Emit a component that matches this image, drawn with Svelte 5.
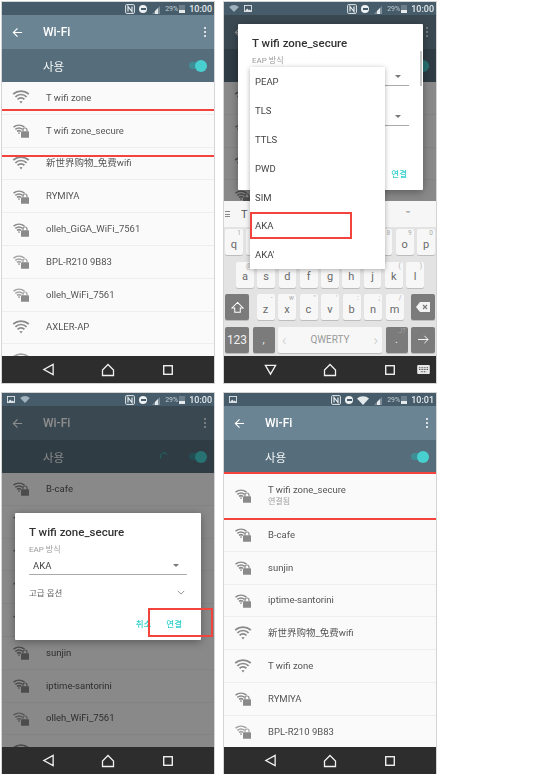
<script>
	const first = [
		{ name: 'T wifi zone' },
		{ name: 'T wifi zone_secure', lock: true },
		{ name: '新世界购物_免费wifi' },
		{ name: 'RYMIYA', lock: true },
		{ name: 'olleh_GiGA_WiFi_7561', lock: true },
		{ name: 'BPL-R210 9B83', lock: true, weak: true },
		{ name: 'olleh_WiFi_7561', lock: true, weak: true },
		{ name: 'AXLER-AP' },
		{ name: '', weak: true }
	];
	const second = [
		{ name: 'T wifi zone' },
		{ name: 'T wifi zone_secure', lock: true },
		{ name: '新世界购物_免费wifi' },
		{ name: 'RYMIYA', lock: true },
		{ name: 'olleh_GiGA_WiFi_7561', lock: true },
		{ name: 'BPL-R210 9B83', lock: true },
		{ name: 'olleh_WiFi_7561', lock: true },
		{ name: 'AXLER-AP' },
		{ name: '' }
	];
	const third = [
		{ name: 'B-cafe', lock: true },
		{ name: '', lock: true },
		{ name: '', lock: true },
		{ name: '', lock: true },
		{ name: '', lock: true },
		{ name: 'sunjin', lock: true },
		{ name: 'iptime-santorini', lock: true },
		{ name: 'olleh_WiFi_7561', lock: true, weak: true },
		{ name: '' }
	];
	const fourth = [
		{ name: 'T wifi zone_secure', lock: true, sub: '연결됨' },
		{ name: 'B-cafe', lock: true },
		{ name: 'sunjin', lock: true },
		{ name: 'iptime-santorini', lock: true },
		{ name: '新世界购物_免费wifi' },
		{ name: 'T wifi zone' },
		{ name: 'RYMIYA', lock: true },
		{ name: 'BPL-R210 9B83', lock: true, weak: true }
	];
	const eap = ['PEAP', 'TLS', 'TTLS', 'PWD', 'SIM', 'AKA', "AKA'"];
	const rows = [
		[['q', '1'], ['w', '2'], ['e', '3'], ['r', '4'], ['t', '5'], ['y', '6'], ['u', '7'], ['i', '8'], ['o', '9'], ['p', '0']],
		[['a', '@'], ['s', ''], ['d', ''], ['f', ''], ['g', ''], ['h', ''], ['j', ''], ['k', '('], ['l', ')']],
		[['z', '-'], ['x', 'w'], ['c', '"'], ['v', "'"], ['b', ':'], ['n', ';'], ['m', '/']]
	];
</script>

{#snippet wifi(lock, weak)}
	<svg class="wifi" class:weak viewBox="0 0 18 15" width="18" height="15">
		{#if lock}
			<g fill="none" stroke-width="1.5">
				<path d="M1.5 4.2a9 9 0 0 1 11 0" />
				<path d="M3.3 6.4a6 6 0 0 1 7.4 0" />
				<path d="M5 8.4a3.3 3.3 0 0 1 4 0" />
			</g>
			<path class="solid" d="M6 10l1-1h0l1 1-1 1.2z" />
			<rect class="solid" x="9" y="8.2" width="8" height="6.6" rx=".6" />
			<path d="M11 8.4V7a2 2 0 0 1 4 0v1.4" fill="none" stroke-width="1.2" />
		{:else}
			<g fill="none" stroke-width="1.7">
				<path d="M1.2 4a12 12 0 0 1 15.6 0" />
				<path d="M3.4 6.8a8 8 0 0 1 11.2 0" />
				<path d="M5.6 9.4a4.6 4.6 0 0 1 6.8 0" />
			</g>
			<path class="solid" d="M7.4 11.6a2.4 2.4 0 0 1 3.2 0L9 13.6z" />
		{/if}
	</svg>
{/snippet}

{#snippet status(time, left, wide)}
	<div class="status">
		<div class="status-left">
			{#each left as item}
				{#if item === 'pic'}
					<svg viewBox="0 0 9 8" width="8" height="7"><rect x=".5" y=".5" width="8" height="7" fill="none" stroke="#e4e9ec" /><path d="M1 7l2.500-3 2 2 1-1 2 2z" fill="#e4e9ec" /></svg>
				{:else}
					<svg viewBox="0 0 11 8" width="10" height="7"><path d="M0 2.200a8 8 0 0 1 11 0L5.500 8z" fill="#9fb2bd" /></svg>
				{/if}
			{/each}
		</div>
		<svg viewBox="0 0 10 10" width="10" height="10"><rect x=".6" y=".6" width="8.800" height="8.800" rx="1" fill="none" stroke="#e4e9ec" /><path d="M3 7.500V2.500l4 5V2.500" fill="none" stroke="#e4e9ec" stroke-width="1.200" /></svg>
		<span class="dnd"></span>
		{#if wide}
			<svg viewBox="0 0 12 10" width="12" height="10"><path d="M0 3.500a9 9 0 0 1 12 0L6 10z" fill="#e4e9ec" /></svg>
		{/if}
		<svg class="signal" viewBox="0 0 10 10" width="10" height="10"><path d="M1 10L9 2v8z" fill="#7d8e99" /><path d="M4 10V7l3-3v6z" fill="#e4e9ec" /></svg>
		<span class="percent">29%</span>
		<span class="battery"></span>
		<span class="time">{time}</span>
	</div>
{/snippet}

{#snippet nav(down)}
	<div class="nav">
		<span class="nav-btn">
			{#if down}
				<svg viewBox="0 0 14 14" width="13" height="13"><path d="M1.500 2.500h11L7 12z" fill="none" stroke="#f2f2f2" stroke-width="1.400" /></svg>
			{:else}
				<svg viewBox="0 0 14 14" width="13" height="13"><path d="M12 1.500v11L2 7z" fill="none" stroke="#f2f2f2" stroke-width="1.400" /></svg>
			{/if}
		</span>
		<span class="nav-btn">
			<svg viewBox="0 0 14 14" width="14" height="14"><path d="M1.500 12.500V7L7 1.500 12.500 7v5.500z" fill="none" stroke="#f2f2f2" stroke-width="1.300" /></svg>
		</span>
		<span class="nav-btn">
			<svg viewBox="0 0 14 14" width="12" height="12"><rect x="2" y="2" width="10" height="10" fill="none" stroke="#f2f2f2" stroke-width="1.600" /></svg>
		</span>
		{#if down}
			<svg class="kb-icon" viewBox="0 0 14 10" width="13" height="9"><rect width="14" height="10" rx="1" fill="#e8e8e8" /><path d="M2 3h10M2 5h10M4 7.500h6" stroke="#333" stroke-width="1" stroke-dasharray="1 .8" /></svg>
		{/if}
	</div>
{/snippet}

{#snippet appbar(spinner)}
	<header class="appbar">
		<svg class="back" viewBox="0 0 12 12" width="11" height="11"><path d="M11 6H2M6 1.500L1.500 6 6 10.500" fill="none" stroke="#fff" stroke-width="1.300" /></svg>
		<span class="appbar-title">Wi-Fi</span>
		<span class="more"><i></i><i></i><i></i></span>
	</header>
	<div class="master">
		<span class="master-label">사용</span>
		{#if spinner}
			<svg class="spinner" viewBox="0 0 10 10" width="9" height="9"><path d="M1 7a4 4 0 0 1 7-4" fill="none" stroke="#37c6c0" stroke-width="1" /></svg>
		{/if}
		<span class="switch"><i></i></span>
	</div>
{/snippet}

{#snippet list(items)}
	<ul class="list">
		{#each items as item}
			<li class="row" class:tall={item.sub}>
				{@render wifi(item.lock, item.weak)}
				<div>
					<div class="name">{item.name}</div>
					{#if item.sub}<div class="sub">{item.sub}</div>{/if}
				</div>
			</li>
		{/each}
	</ul>
{/snippet}

<div class="sheet">
	<section class="phone">
		{@render status('10:00', [])}
		<div class="screen">
			{@render appbar()}
			{@render list(first)}
			<span class="line" style="top: 94px"></span>
			<span class="line" style="top: 140px"></span>
		</div>
		{@render nav()}
	</section>

	<section class="phone">
		{@render status('10:00', ['wifi', 'pic'])}
		<div class="screen">
			{@render appbar()}
			{@render list(second)}
			<div class="dim"></div>
			<div class="dialog dialog-top">
				<h2>T wifi zone_secure</h2>
				<div class="field-label">EAP 방식</div>
				<div class="select blank"><span class="caret"></span></div>
				<div class="select blank second"><span class="caret"></span></div>
				<div class="actions"><span class="action">연결</span></div>
				<span class="scrollbar"></span>
			</div>
			<div class="keyboard">
				<div class="suggest">
					<span class="menu-icon"><i></i><i></i><i></i></span>
					<span class="suggest-t">T</span>
					<span class="tm">™</span>
				</div>
				<div class="keys">
					<div class="key-row">
						{#each rows[0] as [k, alt]}
							<span class="key"><sup>{alt}</sup>{k}</span>
						{/each}
					</div>
					<div class="key-row inset">
						{#each rows[1] as [k, alt]}
							<span class="key"><sup>{alt}</sup>{k}</span>
						{/each}
					</div>
					<div class="key-row">
						<span class="key dark fixed">
							<svg viewBox="0 0 14 14" width="13" height="13"><path d="M7 1.500L13 7.500H10V12H4V7.500H1z" fill="none" stroke="#fff" stroke-width="1.100" /></svg>
						</span>
						<span class="letters">
							{#each rows[2] as [k, alt]}
								<span class="key"><sup>{alt}</sup>{k}</span>
							{/each}
						</span>
						<span class="key dark fixed">
							<svg viewBox="0 0 14 10" width="14" height="10"><path d="M4 0h10v10H4L0 5z" fill="#f2f2f2" /><path d="M7 3l4 4M11 3L7 7" stroke="#777" stroke-width="1.100" /></svg>
						</span>
					</div>
					<div class="key-row">
						<span class="key dark fixed num">123</span>
						<span class="key dark comma">,</span>
						<span class="key space"><b>‹</b>QWERTY<b>›</b></span>
						<span class="key dark comma"><sup>.,!?</sup>.</span>
						<span class="key dark fixed">
							<svg viewBox="0 0 14 12" width="13" height="11"><path d="M1 6h11M8 2l4 4-4 4" fill="none" stroke="#fff" stroke-width="1" /></svg>
						</span>
					</div>
				</div>
			</div>
			<ul class="menu">
				{#each eap as option}
					<li>{option}</li>
				{/each}
			</ul>
			<span class="mark mark-aka"></span>
		</div>
		{@render nav(true)}
	</section>

	<section class="phone">
		{@render status('10:00', ['pic', 'wifi'])}
		<div class="screen">
			{@render appbar(true)}
			{@render list(third)}
			<div class="dim"></div>
			<div class="dialog dialog-low">
				<h2>T wifi zone_secure</h2>
				<div class="field-label">EAP 방식</div>
				<div class="select"><span>AKA</span><span class="caret"></span></div>
				<div class="advanced">
					<span>고급 옵션</span>
					<svg viewBox="0 0 10 6" width="8" height="5"><path d="M1 1l4 4 4-4" fill="none" stroke="#777" stroke-width="1" /></svg>
				</div>
				<div class="actions"><span class="action">취소</span><span class="action">연결</span></div>
			</div>
			<span class="mark mark-connect"></span>
		</div>
		{@render nav()}
	</section>

	<section class="phone">
		{@render status('10:01', ['pic'], true)}
		<div class="screen">
			{@render appbar()}
			{@render list(fourth)}
			<span class="line" style="top: 66px"></span>
			<span class="line" style="top: 112px"></span>
		</div>
		{@render nav()}
	</section>
</div>

<style>
	:global(body) {
		margin: 0;
		background: #fff;
	}

	.sheet {
		display: grid;
		grid-template-columns: 212px 212px;
		grid-auto-rows: 381px;
		gap: 10px;
		width: 436px;
		padding: 2px 0 0 2px;
		font-family: Roboto, 'Noto Sans CJK KR', sans-serif;
		filter: blur(0.3px);
	}

	.phone {
		display: flex;
		flex-direction: column;
		overflow: hidden;
		outline: 1px solid #d4d4d4;
		background: #fafafa;
	}

	.status {
		display: flex;
		flex: 0 0 13px;
		align-items: center;
		gap: 4px;
		padding: 0 2px 0 5px;
		background: #465c6a;
		color: #e4e9ec;
	}

	.status-left {
		display: flex;
		flex: 1;
		align-items: center;
		gap: 5px;
	}

	.dnd {
		position: relative;
		width: 8px;
		height: 8px;
		border-radius: 50%;
		background: #eef1f3;
	}

	.dnd::after {
		content: '';
		position: absolute;
		top: 3px;
		left: 1.500px;
		width: 5px;
		height: 2px;
		background: #465c6a;
	}

	.percent {
		font-size: 7px;
		color: #c3cdd3;
	}

	.battery {
		width: 6px;
		height: 8px;
		margin-left: -3px;
		background: linear-gradient(#6c7e89 60%, #e4e9ec 60%);
	}

	.time {
		font-size: 9px;
		font-weight: 500;
	}

	.screen {
		position: relative;
		display: flex;
		flex: 1;
		flex-direction: column;
		min-height: 0;
		overflow: hidden;
	}

	.appbar {
		display: flex;
		flex: 0 0 34px;
		align-items: center;
		padding: 0 8px 0 10px;
		background: #6b8494;
		color: #fff;
	}

	.back {
		margin-right: 20px;
	}

	.appbar-title {
		flex: 1;
		font-size: 12px;
		font-weight: 500;
	}

	.more {
		display: flex;
		flex-direction: column;
		gap: 1.500px;
	}

	.more i {
		width: 2.500px;
		height: 2.500px;
		border-radius: 50%;
		background: #fff;
	}

	.master {
		display: flex;
		flex: 0 0 33px;
		align-items: center;
		padding: 0 8px 0 41px;
		background: #566d7b;
		color: #f0f3f4;
	}

	.master-label {
		flex: 1;
		font-size: 11.500px;
	}

	.spinner {
		margin-right: 20px;
	}

	.switch {
		position: relative;
		width: 17px;
		height: 7px;
		border-radius: 4px;
		background: #3f8e96;
	}

	.switch i {
		position: absolute;
		top: -2.500px;
		right: -1px;
		width: 12px;
		height: 12px;
		border-radius: 50%;
		background: #48cfcf;
	}

	.list {
		flex: 1;
		margin: 0;
		padding: 0;
		list-style: none;
		background: #fafafa;
	}

	.row {
		display: flex;
		align-items: center;
		box-sizing: border-box;
		height: 32.800px;
		padding-left: 10px;
		border-bottom: 1px solid #eeeeee;
		color: #555;
	}

	.row.tall {
		height: 46px;
	}

	.wifi {
		flex: none;
		margin-right: 16px;
		color: #8a8a8a;
		stroke: #8a8a8a;
	}

	.wifi.weak {
		stroke: #a3a3a3;
	}

	.solid {
		fill: #8a8a8a;
		stroke: none;
	}

	.name {
		font-size: 9.500px;
		line-height: 12px;
	}

	.sub {
		font-size: 8px;
		line-height: 11px;
		color: #a0a0a0;
	}

	.line {
		position: absolute;
		left: 0;
		right: 0;
		height: 2px;
		background: #f2443c;
	}

	.mark {
		position: absolute;
		box-sizing: border-box;
		border: 2px solid #f2443c;
	}

	.mark-aka {
		top: 197px;
		left: 26px;
		width: 102px;
		height: 27px;
	}

	.mark-connect {
		top: 202px;
		left: 146px;
		width: 65px;
		height: 29px;
	}

	.dim {
		position: absolute;
		inset: 0;
		background: rgba(0, 0, 0, 0.45);
	}

	.dialog {
		position: absolute;
		box-sizing: border-box;
		padding: 12px 14px;
		background: #fff;
		border-radius: 1px;
		box-shadow: 0 2px 8px rgba(0, 0, 0, 0.35);
	}

	.dialog-top {
		top: 9px;
		left: 14px;
		width: 185px;
		height: 166px;
	}

	.dialog-low {
		top: 107px;
		left: 13px;
		width: 186px;
		height: 127px;
	}

	h2 {
		margin: 0;
		font-size: 11.500px;
		font-weight: 500;
		line-height: 15px;
		color: #333;
	}

	.field-label {
		margin-top: 5px;
		font-size: 8px;
		line-height: 10px;
		color: #999;
	}

	.select {
		display: flex;
		align-items: center;
		justify-content: space-between;
		height: 17px;
		margin: 2px 0 0;
		padding: 0 8px 0 4px;
		border-bottom: 1px solid #aaa;
		font-size: 9.500px;
		color: #444;
	}

	.select.blank {
		justify-content: flex-end;
	}

	.select.second {
		margin-top: 22px;
	}

	.caret {
		width: 0;
		height: 0;
		border-style: solid;
		border-width: 3px 3px 0;
		border-color: #777 transparent transparent;
	}

	.advanced {
		display: flex;
		align-items: center;
		justify-content: space-between;
		margin-top: 11px;
		padding-right: 2px;
		font-size: 8.500px;
		color: #666;
	}

	.actions {
		position: absolute;
		right: 19px;
		bottom: 11px;
		display: flex;
		gap: 15px;
	}

	.action {
		font-size: 8.500px;
		font-weight: 500;
		color: #35d0d0;
	}

	.dialog-top .actions {
		right: 16px;
	}

	.scrollbar {
		position: absolute;
		top: 27px;
		right: 1px;
		width: 2px;
		height: 35px;
		background: #c6c6c6;
	}

	.menu {
		position: absolute;
		top: 52px;
		left: 26px;
		width: 135px;
		margin: 0;
		padding: 0;
		list-style: none;
		background: #fff;
		box-shadow: 0 1px 5px rgba(0, 0, 0, 0.3);
	}

	.menu li {
		display: flex;
		align-items: center;
		height: 28.900px;
		padding-left: 5px;
		font-size: 9.500px;
		color: #444;
	}

	.keyboard {
		position: absolute;
		right: 0;
		bottom: 0;
		left: 0;
		display: flex;
		flex-direction: column;
		height: 155px;
		background: #e3e3e3;
	}

	.suggest {
		display: flex;
		flex: 0 0 26px;
		align-items: center;
		padding: 0 26px 0 1px;
		background: #f6f6f6;
		color: #555;
	}

	.menu-icon {
		display: flex;
		flex-direction: column;
		gap: 1.500px;
		margin-right: 11px;
	}

	.menu-icon i {
		width: 5px;
		height: 1px;
		background: #888;
	}

	.suggest-t {
		flex: 1;
		font-size: 11px;
	}

	.tm {
		font-size: 7px;
	}

	.keys {
		display: flex;
		flex: 1;
		flex-direction: column;
		gap: 6.500px;
		padding: 2px 1px 0;
	}

	.key-row {
		display: flex;
		gap: 3.500px;
		height: 26px;
	}

	.key-row.inset {
		padding: 0 11px;
	}

	.letters {
		display: flex;
		flex: 1;
		gap: 3.500px;
		padding: 0 4px;
	}

	.key {
		position: relative;
		display: flex;
		flex: 1;
		align-items: center;
		justify-content: center;
		padding-top: 4px;
		box-sizing: border-box;
		border-radius: 2px;
		background: #f7f7f7;
		box-shadow: 0 1px 0 #bdbdbd;
		font-size: 11px;
		color: #6a6a6a;
	}

	.key sup {
		position: absolute;
		top: 0;
		right: 2px;
		font-size: 6.500px;
		line-height: 9px;
		color: #aaa;
	}

	.key.dark {
		background: #7b7b7b;
		color: #f0f0f0;
		padding-top: 0;
	}

	.key.fixed {
		flex: 0 0 24px;
	}

	.key.num {
		font-size: 12px;
	}

	.key.comma {
		flex: 0 0 22px;
	}

	.key.space {
		flex: 1;
		justify-content: space-between;
		padding: 0 4px;
		font-size: 10px;
		color: #9a9a9a;
	}

	.key.space b {
		font-size: 15px;
		font-weight: 300;
		color: #c4c4c4;
	}

	.nav {
		position: relative;
		display: flex;
		flex: 0 0 27px;
		align-items: center;
		justify-content: center;
		background: #2d2d2d;
	}

	.nav-btn {
		display: flex;
		justify-content: center;
		width: 60px;
	}

	.kb-icon {
		position: absolute;
		top: 9px;
		right: 6px;
	}
</style>
